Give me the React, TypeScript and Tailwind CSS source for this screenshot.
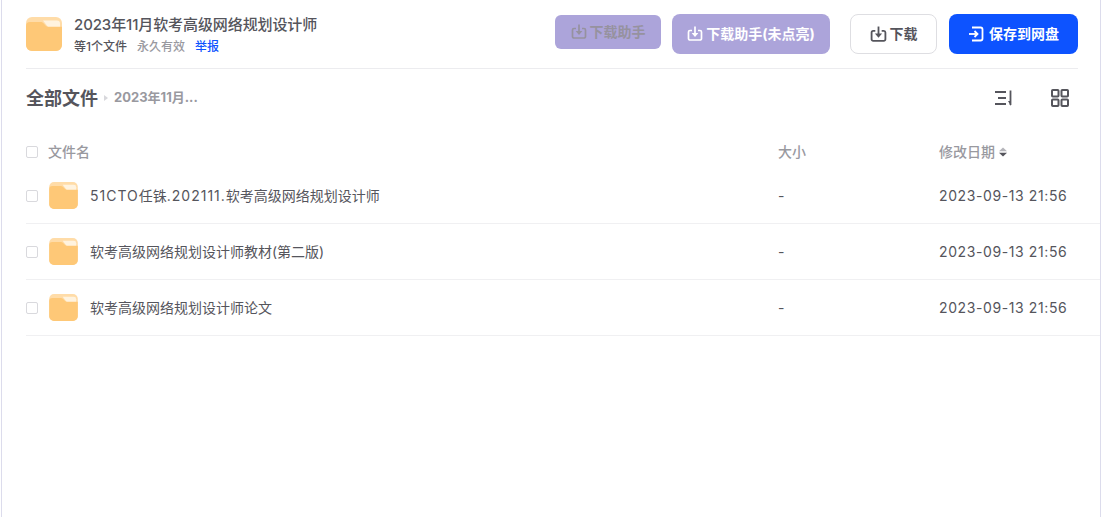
const font = '[font-family:Inter,"Noto_Sans_CJK_SC",sans-serif]';

const rows = [
  { prefix: '51CTO', rest: '任铢', mid: '.202111.', name: '软考高级网络规划设计师' },
  { prefix: '', rest: '', mid: '', name: '软考高级网络规划设计师教材(第二版)' },
  { prefix: '', rest: '', mid: '', name: '软考高级网络规划设计师论文' },
];

const FolderIcon = ({ className }: { className: string }) => (
  <svg viewBox="0 0 36 34" className={className}>
    <rect x="0" y="0" width="36" height="34" rx="6" fill="#ffdca8" />
    <path d="M17 3.500h14a3 3 0 0 1 3 3v3.500H22z" fill="#fff3df" />
    <path d="M0 9a4 4 0 0 1 4-4h10.500c1.200 0 2.200.5 3 1.300L20 8.900c.6.5 1.300.8 2 .8h14V28a6 6 0 0 1-6 6H6a6 6 0 0 1-6-6z" fill="#fec877" />
  </svg>
);

const DownloadIcon = ({ className }: { className: string }) => (
  <svg viewBox="0 0 16 16" fill="none" stroke="currentColor" strokeWidth="1.700" className={className}>
    <path d="M5 4.500H3a1.500 1.500 0 0 0-1.500 1.500v6.500A1.500 1.500 0 0 0 3 14h10a1.500 1.500 0 0 0 1.500-1.500V6A1.500 1.500 0 0 0 13 4.500h-2" />
    <path d="M8 0.500v7" />
    <path d="M4.600 7h6.800L8 11z" fill="currentColor" stroke="none" />
  </svg>
);

const SaveIcon = () => (
  <svg viewBox="0 0 16 16" fill="none" stroke="currentColor" strokeWidth="1.800" className="w-4 h-4">
    <path d="M4 1.500h8.500A2 2 0 0 1 14.500 3.500v9a2 2 0 0 1-2 2H4" />
    <path d="M1 8h8.500" />
    <path d="M6.500 5l3 3-3 3" />
  </svg>
);

const SortIcon = () => (
  <svg viewBox="0 0 19 16" fill="none" stroke="#55555c" strokeWidth="1.800" className="w-[19px] h-[16px]">
    <path d="M0 2h11M3 8h8M0 14h11" />
    <path d="M15.500 0.500V15" />
    <path d="M13 11h3v5z" fill="#55555c" stroke="none" />
  </svg>
);

const GridIcon = () => (
  <svg viewBox="0 0 18 18" fill="none" stroke="#55555c" strokeWidth="2" className="w-[18px] h-[18px]">
    <rect x="1" y="1" width="6.500" height="6.500" rx="0.800" />
    <rect x="10.500" y="1" width="6.500" height="6.500" rx="0.800" />
    <rect x="1" y="10.500" width="6.500" height="6.500" rx="0.800" />
    <rect x="10.500" y="10.500" width="6.500" height="6.500" rx="0.800" />
  </svg>
);

const Checkbox = () => <span className="w-3 h-3 rounded-[2px] border border-[#d9d9dd] bg-white shrink-0" />;

export default function App() {
  return (
    <div className={`${font} h-[517px] w-[1100px] ml-px border-x border-[#dcdcec] bg-white text-[#55555c] overflow-hidden`}>
      <header className="h-[69px] ml-6 mr-[22px] border-b border-[#ececef] flex items-start">
        <FolderIcon className="w-9 h-[34px] mt-[17px] shrink-0" />
        <div className="ml-3 mt-[14px]">
          <div className="text-[15px] leading-[22px] font-medium tracking-[-0.1px]">2023年11月软考高级网络规划设计师</div>
          <div className="mt-[2px] flex text-xs leading-[18px] font-medium">
            <span>等1个文件</span>
            <span className="ml-[10px] text-[#99999f]">永久有效</span>
            <span className="ml-[10px] text-[#0d53ff]">举报</span>
          </div>
        </div>
        <div className="ml-auto mt-[14px] flex items-start">
          <button className="mt-px w-[106px] h-[34px] rounded-md bg-[#aca4da] text-[#96929f] text-sm font-bold flex items-center justify-center gap-[3px]">
            <DownloadIcon className="w-[16px] h-[16px]" />
            下载助手
          </button>
          <button className="ml-[11px] w-[158px] h-10 rounded-lg bg-[#aca4da] text-white text-sm font-bold flex items-center justify-center gap-[3px]">
            <DownloadIcon className="w-[16px] h-[16px]" />
            下载助手(未点亮)
          </button>
          <button className="ml-5 w-[87px] h-10 rounded-lg border border-[#dedee2] bg-white text-sm font-bold flex items-center justify-center gap-[3px]">
            <DownloadIcon className="w-[17px] h-[17px]" />
            下载
          </button>
          <button className="ml-3 w-[129px] h-10 rounded-lg bg-[#0d53ff] text-white text-sm font-bold flex items-center justify-center gap-[5px]">
            <SaveIcon />
            保存到网盘
          </button>
        </div>
      </header>

      <div className="h-[58px] ml-6 mr-[31px] flex items-center">
        <span className="text-[18px] font-bold">全部文件</span>
        <span className="ml-[6px] w-0 h-0 border-y-[3px] border-y-transparent border-l-[4px] border-l-[#d8d8dc]" />
        <span className="ml-[6px] text-[13px] font-bold text-[#99999f]">2023年11月...</span>
        <div className="ml-auto flex items-center gap-[37px]">
          <SortIcon />
          <GridIcon />
        </div>
      </div>

      <div className="h-[41px] pt-[9px] ml-6 grid grid-cols-[752px_161px_1fr] items-center text-sm font-medium text-[#99999f]">
        <div className="flex items-center gap-[10px]">
          <Checkbox />
          文件名
        </div>
        <div>大小</div>
        <div className="flex items-center gap-1">
          修改日期
          <svg viewBox="0 0 8 10" className="w-2 h-[10px]">
            <path d="M4 0.500 8 4.300H0z" fill="#b5b5ba" />
            <path d="M4 9.500 0 5.700h8z" fill="#55555c" />
          </svg>
        </div>
      </div>

      {rows.map((row) => (
        <div key={row.name} className="h-14 ml-6 border-b border-[#f0f0f2] grid grid-cols-[752px_161px_1fr] items-center text-sm">
          <div className="flex items-center">
            <Checkbox />
            <FolderIcon className="ml-[11px] w-[29px] h-[27px] shrink-0" />
            <span className="ml-3">
              <span className="tracking-[1px]">{row.prefix}</span>
              {row.rest}
              <span className="tracking-[1px]">{row.mid}</span>
              {row.name}
            </span>
          </div>
          <div>-</div>
          <div className="tracking-[0.6px]">2023-09-13 21:56</div>
        </div>
      ))}
    </div>
  );
}
